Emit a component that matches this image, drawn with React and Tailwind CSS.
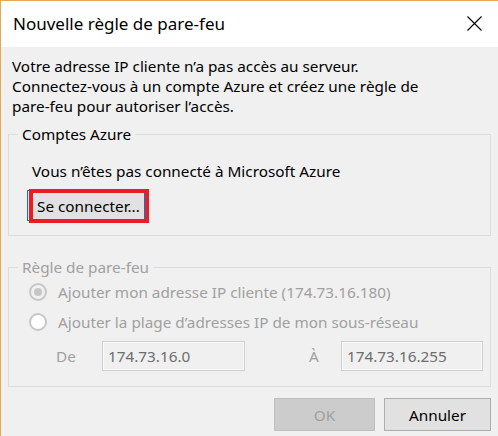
export default function App() {
  return (
    <div className="w-[498px] h-[436px] flex flex-col border-t border-l border-[#e6a853] bg-[#f0f0f0] font-['Noto_Sans',sans-serif] text-black overflow-hidden">
      <div className="h-[46px] shrink-0 bg-white flex justify-between items-start">
        <div className="ml-[12px] mt-[11px] text-[17px] leading-[24px]">Nouvelle règle de pare-feu</div>
        <svg className="mt-[15px] mr-[16px]" width="15" height="15" viewBox="0 0 15 15">
          <path d="M0.5 0.5 L14.5 14.5 M14.5 0.5 L0.5 14.5" stroke="#000" strokeWidth="1.1" fill="none" />
        </svg>
      </div>
      <div className="flex flex-col text-[15.3px] leading-[20px]">
        <p className="ml-[11px] mt-[9px]">
          Votre adresse IP cliente n’a pas accès au serveur.
          <br />
          Connectez-vous à un compte Azure et créez une règle de
          <br />
          pare-feu pour autoriser l’accès.
        </p>

        <fieldset className="mx-[7px] mt-[8px] border border-[#dcdcdc] pb-[14px]">
          <legend className="ml-[9px] px-[4px]">Comptes Azure</legend>
          <div className="ml-[23px] mt-[17px]">Vous n’êtes pas connecté à Microsoft Azure</div>
          <div className="relative ml-[18px] mt-[9px] w-[118px] h-[31px]">
            <button className="w-[118px] h-[31px] border border-[#0078d7] bg-[#e1e1e1] text-[15.3px] leading-[20px] text-black pl-[9px] text-left whitespace-nowrap">
              Se connecter...
            </button>
            <div className="absolute left-[2px] top-[-1px] w-[120px] h-[34px] border-4 border-[#ec1c24]"></div>
          </div>
        </fieldset>

        <fieldset className="mx-[7px] mt-[21px] border border-[#dcdcdc] pb-[15px] text-[#a0a0a0]">
          <legend className="ml-[9px] px-[4px]">Règle de pare-feu</legend>
          <div className="ml-[20px] mt-[5px] flex items-center gap-[11px]">
            <span className="w-[18px] h-[18px] rounded-full border-2 border-[#c6c6c6] bg-[#f0f0f0] flex items-center justify-center">
              <span className="w-[8px] h-[8px] rounded-full bg-[#c6c6c6]"></span>
            </span>
            <span>Ajouter mon adresse IP cliente (174.73.16.180)</span>
          </div>
          <div className="ml-[20px] mt-[10px] flex items-center gap-[11px]">
            <span className="w-[18px] h-[18px] rounded-full border-2 border-[#c6c6c6] bg-white"></span>
            <span>Ajouter la plage d’adresses IP de mon sous-réseau</span>
          </div>
          <div className="mt-[9px] flex items-center">
            <span className="ml-[47px] w-[46px]">De</span>
            <div className="w-[143px] h-[30px] border border-[#cfcfcf] shadow-[inset_0_0_0_1px_#fafafa] bg-[#f0f0f0] text-[#6d6d6d] pl-[5px] flex items-center">174.73.16.0</div>
            <span className="ml-[64px] w-[32px]">À</span>
            <div className="w-[142px] h-[30px] border border-[#cfcfcf] shadow-[inset_0_0_0_1px_#fafafa] bg-[#f0f0f0] text-[#6d6d6d] pl-[5px] flex items-center">174.73.16.255</div>
          </div>
        </fieldset>

        <div className="mt-[11px] mr-[7px] flex justify-end gap-[9px]">
          <button className="w-[101px] h-[33px] border border-[#bfbfbf] bg-[#cccccc] text-[#a0a0a0] text-[15.3px]">OK</button>
          <button className="w-[107px] h-[33px] border border-[#adadad] bg-[#e1e1e1] text-black text-[15.3px]">Annuler</button>
        </div>
      </div>
    </div>
  );
}
